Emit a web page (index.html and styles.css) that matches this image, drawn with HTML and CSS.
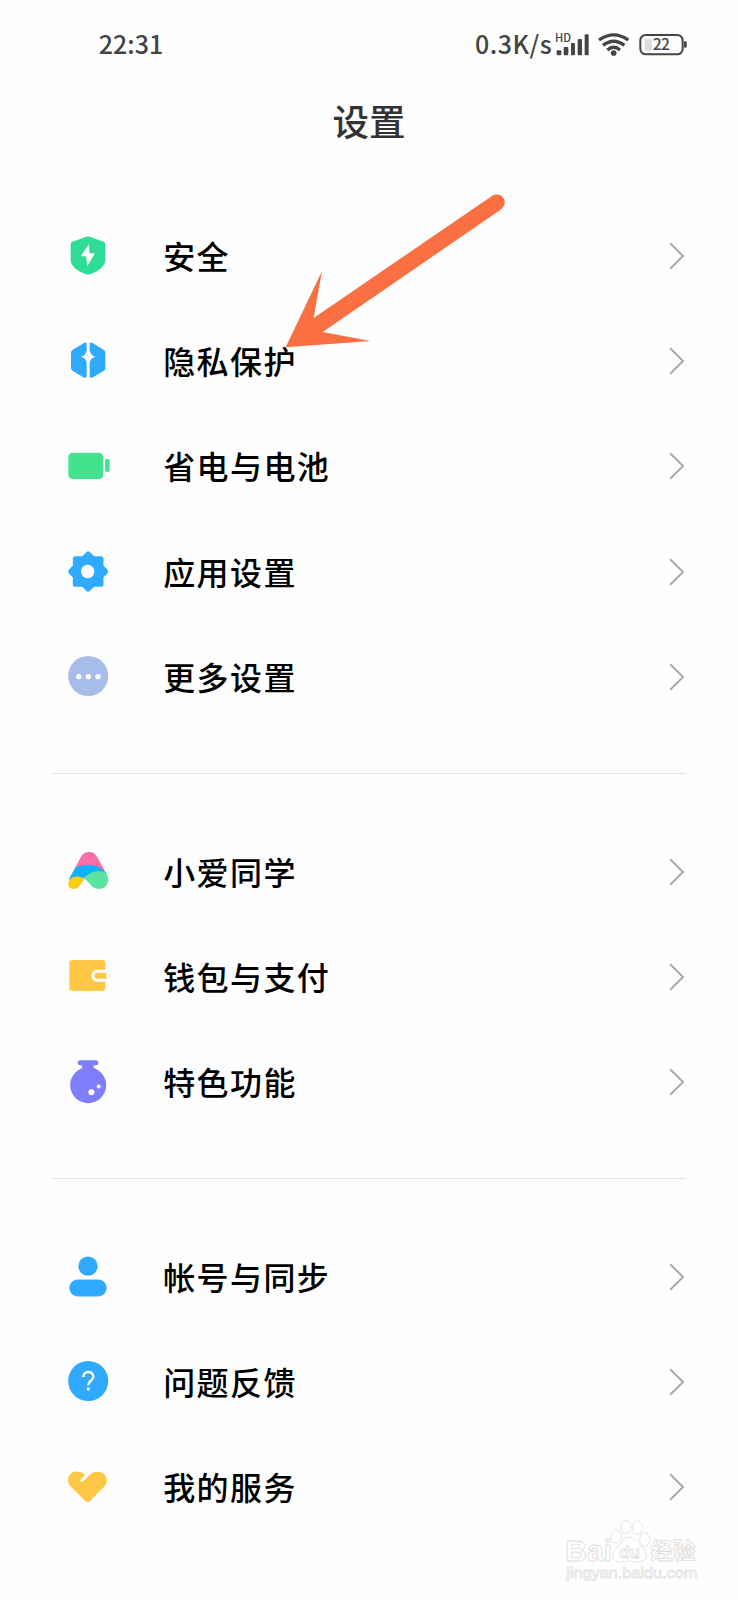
FILE: index.html
```
<!DOCTYPE html>
<html lang="zh-CN">
<head>
<meta charset="utf-8">
<title>设置</title>
<link rel="stylesheet" href="styles.css">
</head>
<body>
<div class="screen">
  <header class="status">
    <span class="time">22:31</span>
    <div class="indicators">
      <span class="speed">0.3K/s</span>
      <svg class="signals" viewBox="280 25 410 90">
        <text class="hd" x="283" y="63" textLength="48" lengthAdjust="spacingAndGlyphs">HD</text>
        <g fill="#444">
          <rect x="288" y="89" width="14" height="15" rx="3"/>
          <rect x="309" y="79" width="14" height="25" rx="3"/>
          <rect x="331" y="67" width="12" height="37" rx="3"/>
          <rect x="351" y="55" width="13" height="49" rx="3"/>
          <rect x="372" y="41" width="12" height="63" rx="3"/>
          <circle cx="459" cy="97" r="8.500"/>
        </g>
        <g fill="none" stroke="#444" stroke-width="10">
          <path d="M415 58Q459 27 503 58"/>
          <path d="M427 74Q459 49 491 74"/>
          <path d="M440 88Q459 71 478 88"/>
        </g>
        <rect x="539" y="43" width="127" height="58" rx="16" fill="none" stroke="#444" stroke-width="6"/>
        <rect x="552" y="55" width="22" height="35" rx="5" fill="#ddd"/>
        <rect x="670" y="62" width="8" height="19" rx="3" fill="#444"/>
        <text class="level" x="576" y="89" textLength="52">22</text>
      </svg>
    </div>
  </header>
  <h1 class="title">设置</h1>

  <main class="list">
    <section class="group">
      <a class="row">
        <svg class="icon" viewBox="44 34.5 144 144">
          <path d="M111 49Q116 46 121 49L163 64Q168 66 168 71V118Q168 131 157 141Q145 153 123 161Q116 163 109 161Q87 153 75 141Q64 131 64 118V71Q64 66 69 64Z" fill="#2fdc96"/>
          <path d="M119 71L94 107H110L114 137L137 98H121Z" fill="#fff"/>
        </svg>
        <span class="label">安全</span>
        <svg class="chevron" viewBox="0 0 16 28"><path d="M1.7 1.7L14 14L1.7 26.3"/></svg>
      </a>
      <a class="row">
        <svg class="icon" viewBox="44 351 144 144">
          <path d="M112 371V393Q109 405 96 410Q109 415 112 427V469Q111 475 105 473L70 453Q65 450 65 444V398Q65 392 70 389L105 368Q111 366 112 371Z" fill="#30aaff"/>
          <path d="M121 371V393Q124 405 137 410Q124 415 121 427V469Q122 475 128 473L163 453Q168 450 168 444V398Q168 392 163 389L128 368Q122 366 121 371Z" fill="#30aaff"/>
        </svg>
        <span class="label">隐私保护</span>
        <svg class="chevron" viewBox="0 0 16 28"><path d="M1.7 1.7L14 14L1.7 26.3"/></svg>
      </a>
      <a class="row">
        <svg class="icon" viewBox="44 36 144 144">
          <rect x="57" y="68" width="105" height="79" rx="13" fill="#43e28e"/>
          <rect x="167" y="87" width="14" height="39" rx="6" fill="#43e28e"/>
        </svg>
        <span class="label">省电与电池</span>
        <svg class="chevron" viewBox="0 0 16 28"><path d="M1.7 1.7L14 14L1.7 26.3"/></svg>
      </a>
      <a class="row">
        <svg class="icon" viewBox="44 352.5 144 144">
          <path d="M116.500 371L131.500 385H154.500V408L168.500 423L154.500 438V461H131.500L116.500 475L101.500 461H78.500V438L64.500 423L78.500 408V385H101.500Z" fill="#30aaff" stroke="#30aaff" stroke-width="16" stroke-linejoin="round"/>
          <circle cx="115" cy="423" r="20" fill="#fff"/>
        </svg>
        <span class="label">应用设置</span>
        <svg class="chevron" viewBox="0 0 16 28"><path d="M1.7 1.7L14 14L1.7 26.3"/></svg>
      </a>
      <a class="row">
        <svg class="icon" viewBox="44 39 144 144">
          <circle cx="116.500" cy="108" r="60" fill="#a6bdea"/>
          <g fill="#fff"><circle cx="88" cy="110" r="8"/><circle cx="117" cy="110" r="8"/><circle cx="146" cy="110" r="8"/></g>
        </svg>
        <span class="label">更多设置</span>
        <svg class="chevron" viewBox="0 0 16 28"><path d="M1.7 1.7L14 14L1.7 26.3"/></svg>
      </a>
    </section>

    <section class="group">
      <a class="row">
        <svg class="icon" viewBox="44 24 144 144">
          <path d="M59 120L94 52Q103 35 120 36Q136 36 144 52L173 104L120 110Z" fill="#fc6fa8"/>
          <path d="M59 116L79 82Q98 73 126 74Q156 78 173 104L150 110L106 112L84 128Z" fill="#10b3fa"/>
          <path d="M57 128Q60 111 80 110Q93 107 106 117C97 127 90 147 71 147Q56 145 57 128Z" fill="#fdcc13"/>
          <path d="M104 116Q119 96 143 94Q163 93 171 101Q178 111 177 121Q173 146 150 147Q132 148 120 130Q113 120 104 116Z" fill="#5be3a0"/>
        </svg>
        <span class="label">小爱同学</span>
        <svg class="chevron" viewBox="0 0 16 28"><path d="M1.7 1.7L14 14L1.7 26.3"/></svg>
      </a>
      <a class="row">
        <svg class="icon" viewBox="44 339 144 144">
          <rect x="60" y="360" width="108" height="93" rx="9" fill="#ffc745"/>
          <path d="M171 394H145C126 394 126 421 145 421H171" fill="#ffc745" stroke="#fff" stroke-width="9"/>
        </svg>
        <span class="label">钱包与支付</span>
        <svg class="chevron" viewBox="0 0 16 28"><path d="M1.7 1.7L14 14L1.7 26.3"/></svg>
      </a>
      <a class="row">
        <svg class="icon" viewBox="44 55.5 144 144">
          <g fill="#7f7efa"><rect x="85" y="62" width="62" height="15" rx="7.5"/><rect x="98" y="70" width="35" height="25"/><circle cx="116.500" cy="137" r="54"/></g>
          <circle cx="126" cy="158" r="9" fill="#fff"/><circle cx="148" cy="141" r="6" fill="#fff"/>
        </svg>
        <span class="label">特色功能</span>
        <svg class="chevron" viewBox="0 0 16 28"><path d="M1.7 1.7L14 14L1.7 26.3"/></svg>
      </a>
    </section>

    <section class="group">
      <a class="row">
        <svg class="icon" viewBox="44 40.5 144 144">
          <circle cx="116" cy="80" r="29" fill="#30aaff"/>
          <rect x="60" y="120" width="112" height="51" rx="25.500" fill="#30aaff"/>
        </svg>
        <span class="label">帐号与同步</span>
        <svg class="chevron" viewBox="0 0 16 28"><path d="M1.7 1.7L14 14L1.7 26.3"/></svg>
      </a>
      <a class="row">
        <svg class="icon" viewBox="44 357 144 144">
          <circle cx="116.500" cy="426" r="60" fill="#30aaff"/>
          <path d="M102 414C102 394 132 394 132 413C132 425 117 424 117 439" fill="none" stroke="#fff" stroke-width="7.500"/>
          <circle cx="117" cy="450" r="5" fill="#fff"/>
        </svg>
        <span class="label">问题反馈</span>
        <svg class="chevron" viewBox="0 0 16 28"><path d="M1.7 1.7L14 14L1.7 26.3"/></svg>
      </a>
      <a class="row">
        <svg class="icon" viewBox="44 42 144 144">
          <path d="M65 113C53 102 54 84 63 75C74 64 96 66 107 78L95 90Q92 94 94 97Q97 100 102 97L123 76C133 66 153 65 164 75C175 86 176 101 164 113L123 155Q115 163 107 155Z" fill="#ffc745"/>
        </svg>
        <span class="label">我的服务</span>
        <svg class="chevron" viewBox="0 0 16 28"><path d="M1.7 1.7L14 14L1.7 26.3"/></svg>
      </a>
    </section>
  </main>

  <svg class="arrow" viewBox="0 0 690 470">
    <path d="M17 463L126 234L101 375L637 8C665 -6 690 28 662 50L128 417L272 444Z" fill="#fb7042"/>
  </svg>

  <svg class="watermark" viewBox="40 175 410 200">
    <g fill="#fff" stroke="#ddd" stroke-width="2.500">
      <text class="brand" x="47" y="304" textLength="140" lengthAdjust="spacingAndGlyphs">Bai</text>
      <ellipse cx="199" cy="230" rx="15" ry="20"/>
      <ellipse cx="228" cy="202" rx="15" ry="20"/>
      <ellipse cx="263" cy="204" rx="15" ry="20"/>
      <ellipse cx="285" cy="239" rx="15" ry="20"/>
      <path d="M237 232C257 232 264 250 278 263C294 278 297 298 278 305C265 310 252 304 239 304C226 304 210 311 198 303C184 293 188 275 203 263C217 251 220 232 237 232Z"/>
      <text class="du" x="208" y="295" textLength="63" lengthAdjust="spacingAndGlyphs">du</text>
      <text class="cn" x="302" y="299" textLength="136" lengthAdjust="spacingAndGlyphs">经验</text>
      <text class="site" x="50" y="356" textLength="393" lengthAdjust="spacingAndGlyphs">jingyan.baidu.com</text>
    </g>
  </svg>
</div>
</body>
</html>
```
FILE: styles.css
```
body {
  margin: 0;
  background: #fefefe;
  font-family: "Noto Sans CJK SC", sans-serif;
}
.screen {
  position: relative;
  width: 738px;
  height: 1600px;
  overflow: hidden;
}
.status {
  display: flex;
  justify-content: space-between;
  align-items: center;
  height: 87px;
  padding: 0 47.5px 0 98.7px;
  color: #444;
  font-size: 25px;
  font-weight: 500;
  line-height: 1;
}
.indicators {
  display: flex;
  align-items: center;
}
.speed {
  margin-right: 1.5px;
  letter-spacing: 0.5px;
}
.signals {
  display: block;
  width: 136.67px;
  height: 30px;
}
.hd {
  font-size: 33px;
  font-weight: 500;
  fill: #444;
}
.level {
  font-size: 47px;
  font-weight: 500;
  fill: #444;
}
.title {
  margin: 0;
  height: 116px;
  color: #333;
  font-size: 36.5px;
  font-weight: 500;
  line-height: 67px;
  text-align: center;
}
.group + .group {
  margin-top: 43.5px;
  padding-top: 44.7px;
  border-top: 1.5px solid #e4e4e4;
}
.list {
  padding: 0 52px;
}
.row {
  display: flex;
  align-items: center;
  height: 105.35px;
  padding-left: 12.2px;
}
.icon {
  flex: none;
  width: 48px;
  height: 48px;
}
.label {
  flex: 1;
  margin-left: 51px;
  padding-bottom: 2px;
  color: #000;
  font-size: 32px;
  font-weight: 500;
  letter-spacing: 1.4px;
  line-height: 46px;
}
.chevron {
  width: 16px;
  height: 28px;
  margin-right: 1px;
  fill: none;
  stroke: #aaa;
  stroke-width: 2;
  stroke-linecap: round;
}
.arrow {
  position: absolute;
  left: 280px;
  top: 193px;
  width: 230px;
  height: 156.67px;
}
.watermark {
  position: absolute;
  left: 563.3px;
  top: 1518.3px;
  width: 136.67px;
  height: 66.67px;
}
.brand {
  font: 700 88px "Liberation Sans", sans-serif;
}
.du {
  font: 700 52px "Liberation Sans", sans-serif;
}
.cn {
  font-size: 68px;
  font-weight: 700;
}
.site {
  font: 400 45px "Liberation Sans", sans-serif;
  stroke: #e4e4e4;
}
```
